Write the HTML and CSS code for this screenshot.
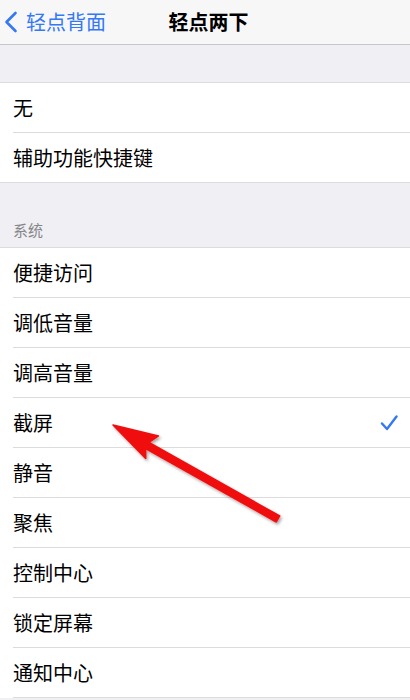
FILE: index.html
```html
<!DOCTYPE html>
<html lang="zh-CN">
<head>
  <meta charset="UTF-8" />
  <meta name="viewport" content="width=device-width, initial-scale=1.0" />
  <title>轻点两下</title>
  <link rel="stylesheet" href="styles.css">
</head>
<body>

  <div class="nav">
    <a class="back" href="#">
      <svg viewBox="0 0 14 22" width="14" height="22">
        <path d="M11.5 2 L2.5 11 L11.5 20" fill="none" stroke="#3478f6" stroke-width="2.6" stroke-linecap="round" stroke-linejoin="round"/>
      </svg>
      <span>轻点背面</span>
    </a>
    <div class="title">轻点两下</div>
    <div></div>
  </div>

  <div class="gap"></div>

  <ul class="group">
    <li class="row"><span>无</span></li>
    <li class="row"><span>辅助功能快捷键</span></li>
  </ul>

  <div class="section-head">系统</div>

  <ul class="group">
    <li class="row"><span>便捷访问</span></li>
    <li class="row"><span>调低音量</span></li>
    <li class="row"><span>调高音量</span></li>
    <li class="row">
      <span>截屏</span>
      <svg class="check" viewBox="0 0 18 18" width="18" height="18">
        <path d="M2 9.5 L7 15 L16.5 2.5" fill="none" stroke="#3478f6" stroke-width="2.4" stroke-linecap="round" stroke-linejoin="round"/>
      </svg>
    </li>
    <li class="row"><span>静音</span></li>
    <li class="row"><span>聚焦</span></li>
    <li class="row"><span>控制中心</span></li>
    <li class="row"><span>锁定屏幕</span></li>
    <li class="row"><span>通知中心</span></li>
  </ul>

  <!-- red annotation arrow over the list -->
  <svg class="arrow" viewBox="0 0 410 700" width="410" height="700">
    <defs>
      <filter id="shadow" x="-10%" y="-10%" width="120%" height="120%">
        <feDropShadow dx="1.5" dy="2" stdDeviation="1.5" flood-color="#000" flood-opacity="0.35"/>
      </filter>
    </defs>
    <polygon filter="url(#shadow)" fill="#f01010" stroke="#f01010" stroke-width="1.5" stroke-linejoin="round"
      points="113,425 158.5,436 149,442.5 279.7,516 276.3,522 145.6,448.5 145.7,458.6"/>
  </svg>

</body>
</html>
```

FILE: styles.css
```css
html, body {
  margin: 0;
  padding: 0;
}

body {
  background-color: #efeff4;
  color: #000;
  font-family: "Noto Sans CJK SC", "Noto Sans", sans-serif;
  width: 410px;
  height: 700px;
  overflow: hidden;
  position: relative;
}

.nav {
  height: 44px;
  display: grid;
  grid-template-columns: 1fr auto 1fr;
  align-items: center;
  background-color: #f7f7f8;
  border-bottom: 1px solid #c6c6c9;
}

.back {
  display: flex;
  align-items: center;
  gap: 8px;
  padding-left: 4px;
  color: #3478f6;
  text-decoration: none;
  font-size: 20px;
  line-height: 24px;
}

.back svg {
  display: block;
}

.title {
  font-size: 20px;
  font-weight: 600;
  line-height: 24px;
  padding-left: 7px;
}

.gap {
  height: 37px;
}

.group {
  list-style: none;
  margin: 0;
  padding: 0;
  background-color: #fff;
  border-top: 1px solid #dcdcdf;
}

.row {
  height: 49px;
  margin-left: 13px;
  padding-right: 12px;
  display: flex;
  align-items: center;
  justify-content: space-between;
  border-bottom: 1px solid #dcdcdf;
  font-size: 20px;
  line-height: 24px;
}

.row:last-child {
  border-bottom: none;
  margin-left: 0;
  padding-left: 13px;
  height: 49px;
}

.group:last-of-type .row:last-child {
  border-bottom: 1px solid #dcdcdf;
  margin-left: 13px;
  padding-left: 0;
}

.check {
  display: block;
}

.section-head {
  height: 65px;
  box-sizing: border-box;
  border-top: 1px solid #dcdcdf;
  padding: 38px 13px 0;
  font-size: 15px;
  line-height: 18px;
  color: #86868a;
}

.arrow {
  position: absolute;
  left: 0;
  top: 0;
  pointer-events: none;
}
```
